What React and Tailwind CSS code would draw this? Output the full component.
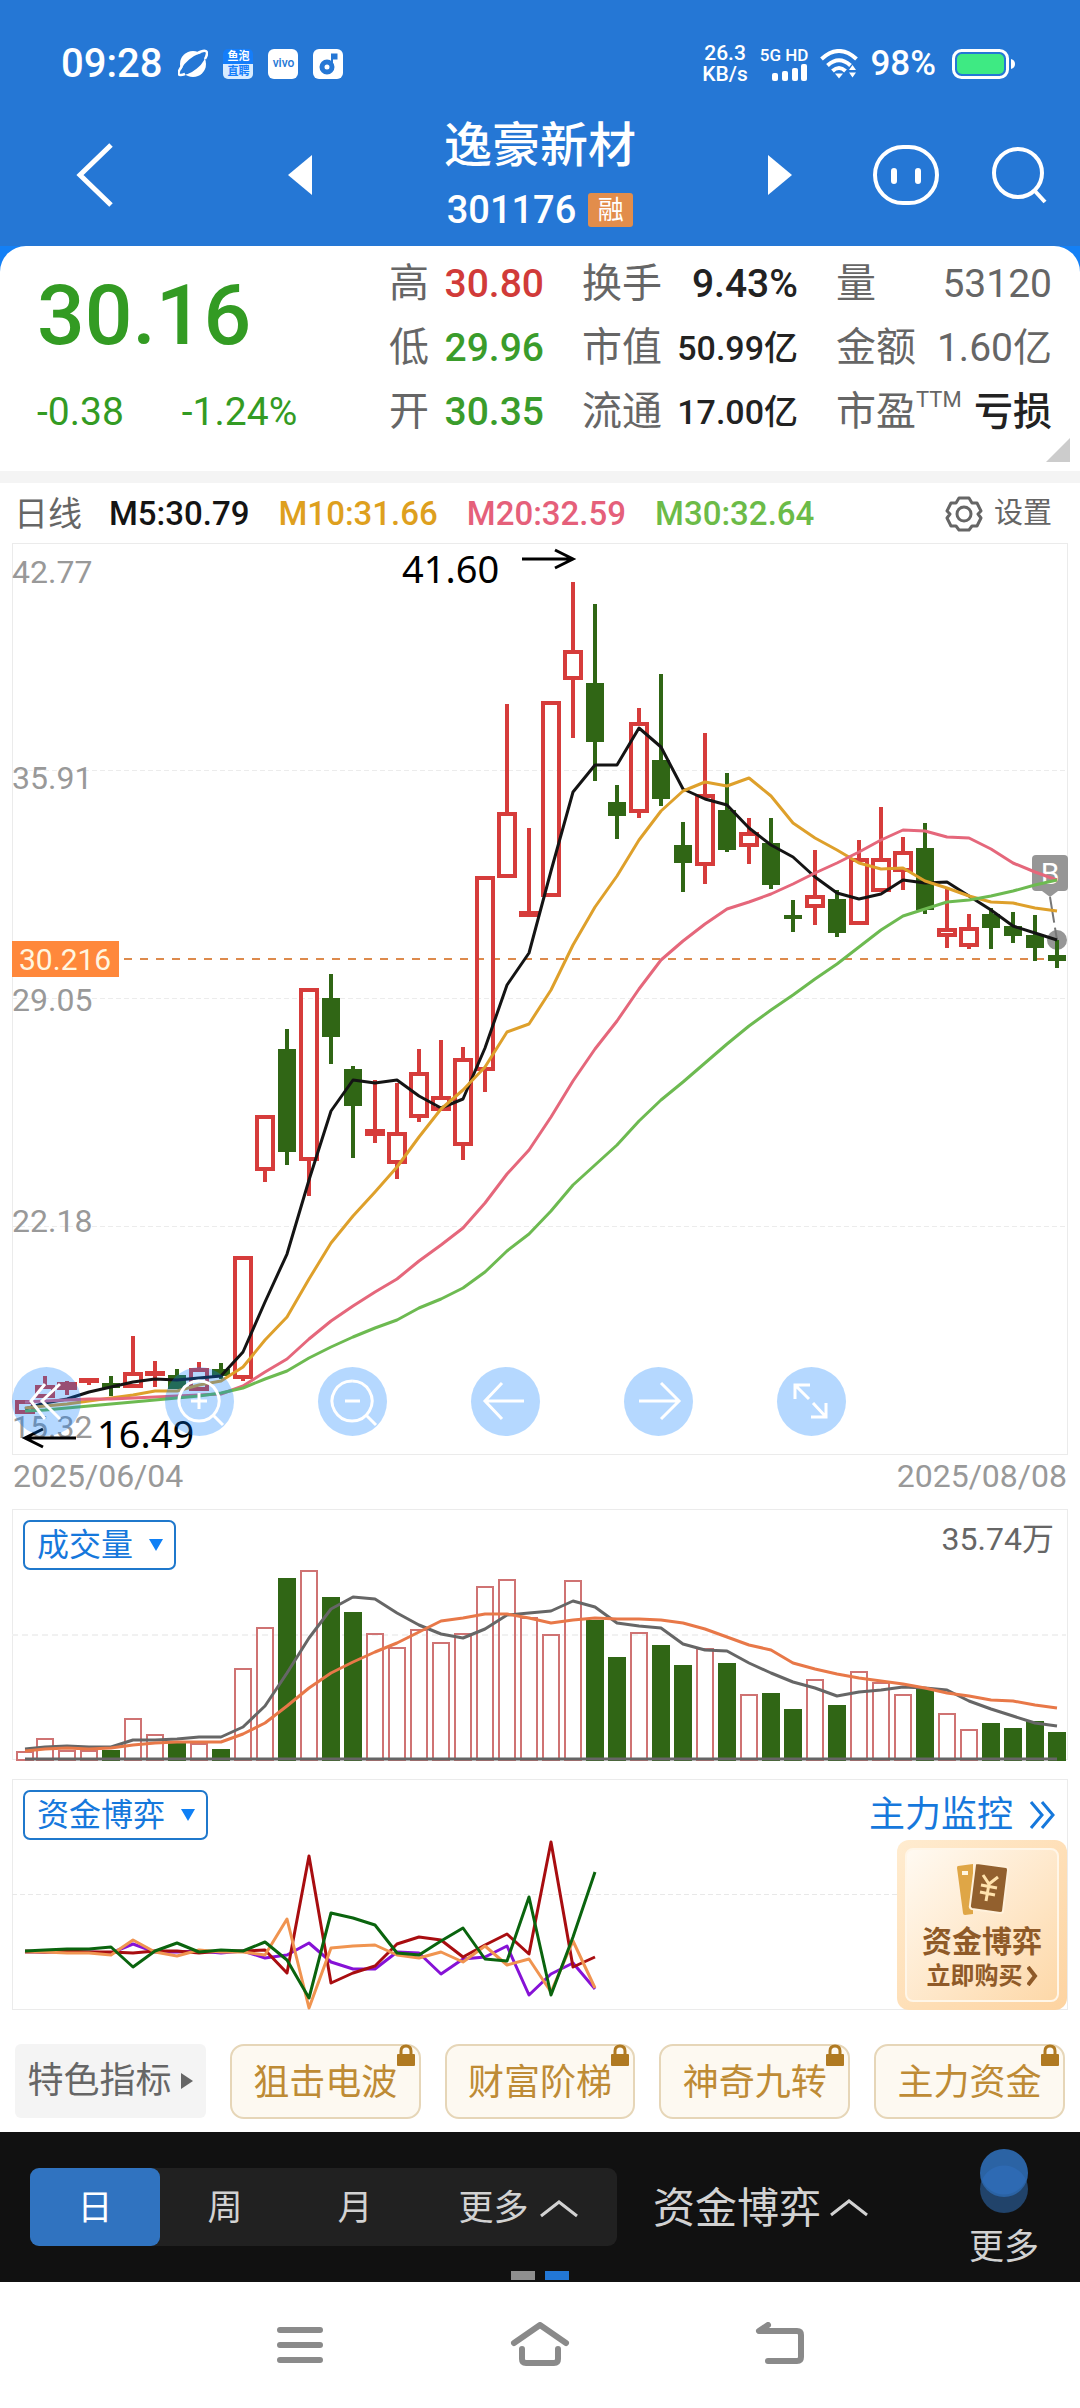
import React, { useState } from 'react';

const RED = '#d63c3b';
const GREEN = '#306615';

// [high, bodyTop, bodyBottom, low, up]
const candles = [
  [1400, 1400, 1414, 1414, 1], [1376, 1385, 1398, 1398, 1], [1381, 1382, 1390, 1395, 1], [1378, 1378, 1383, 1385, 1],
  [1376, 1383, 1388, 1396, 0], [1336, 1372, 1388, 1388, 1], [1361, 1371, 1375, 1387, 1], [1369, 1375, 1389, 1389, 0],
  [1362, 1368, 1391, 1391, 1], [1363, 1369, 1376, 1379, 0], [1256, 1256, 1379, 1381, 1], [1115, 1115, 1171, 1182, 1],
  [1029, 1049, 1152, 1165, 0], [988, 988, 1161, 1196, 1], [974, 998, 1037, 1064, 0], [1066, 1069, 1106, 1158, 0],
  [1080, 1129, 1136, 1143, 1], [1083, 1132, 1164, 1179, 1], [1049, 1072, 1118, 1122, 1], [1040, 1096, 1111, 1111, 1],
  [1047, 1058, 1146, 1160, 1], [876, 876, 1071, 1092, 1], [704, 812, 878, 878, 1], [828, 911, 917, 917, 1],
  [701, 701, 897, 897, 1], [582, 650, 680, 738, 1], [604, 683, 742, 781, 0], [785, 802, 816, 839, 0],
  [708, 722, 813, 818, 1], [674, 760, 799, 806, 0], [822, 845, 863, 892, 0], [733, 794, 866, 884, 1],
  [773, 810, 850, 852, 0], [818, 832, 847, 864, 1], [818, 843, 885, 889, 0], [900, 915, 919, 932, 0],
  [850, 895, 908, 925, 1], [890, 899, 933, 937, 0], [840, 858, 925, 925, 1], [807, 858, 892, 892, 1],
  [837, 851, 872, 890, 1], [823, 848, 910, 914, 0], [888, 928, 937, 948, 1], [914, 927, 947, 949, 1],
  [908, 914, 928, 949, 0], [912, 926, 936, 943, 0], [915, 935, 948, 961, 0], [940, 955, 961, 968, 0],
];

const averages = [
  { color: '#141414', data: [1409, 1403, 1399, 1392, 1387, 1382, 1379, 1380, 1378, 1376, 1352, 1302, 1254, 1180, 1111, 1080, 1083, 1080, 1096, 1108, 1099, 1048, 985, 953, 871, 792, 765, 765, 728, 747, 789, 799, 805, 828, 845, 857, 877, 893, 899, 894, 880, 883, 882, 896, 910, 926, 933, 940] },
  { color: '#dea02b', data: [1408, 1406, 1404, 1401, 1398, 1395, 1391, 1391, 1385, 1381, 1367, 1340, 1317, 1279, 1243, 1216, 1192, 1167, 1137, 1109, 1090, 1067, 1032, 1024, 990, 945, 907, 876, 840, 811, 791, 782, 786, 778, 796, 823, 838, 850, 863, 869, 868, 881, 888, 896, 902, 903, 908, 911] },
  { color: '#e5677b', data: [1402, 1401, 1400, 1399, 1399, 1398, 1397, 1396, 1395, 1394, 1386, 1372, 1359, 1339, 1321, 1306, 1292, 1279, 1261, 1245, 1228, 1203, 1174, 1150, 1117, 1081, 1049, 1021, 989, 960, 941, 924, 909, 902, 894, 884, 873, 863, 852, 840, 830, 831, 837, 838, 849, 863, 872, 880] },
  { color: '#6dba51', data: [1411, 1410, 1408, 1406, 1404, 1402, 1400, 1398, 1396, 1393, 1388, 1379, 1371, 1358, 1347, 1337, 1328, 1320, 1308, 1299, 1288, 1272, 1251, 1234, 1211, 1185, 1165, 1145, 1121, 1100, 1082, 1063, 1044, 1026, 1010, 995, 979, 964, 947, 930, 916, 909, 902, 900, 896, 891, 885, 880] },
];

const volumes = [1751, 1738, 1750, 1750, 1750, 1718, 1734, 1743, 1743, 1749, 1668, 1627, 1578, 1570, 1597, 1612, 1633, 1647, 1629, 1642, 1633, 1586, 1579, 1617, 1634, 1580, 1620, 1657, 1632, 1645, 1665, 1648, 1663, 1694, 1693, 1709, 1679, 1705, 1671, 1682, 1694, 1688, 1713, 1729, 1723, 1728, 1721, 1732];

const volumeLines = [
  { color: '#666666', data: [1749, 1747, 1746, 1747, 1747, 1740, 1740, 1739, 1737, 1737, 1727, 1706, 1673, 1638, 1609, 1597, 1599, 1613, 1625, 1634, 1638, 1629, 1615, 1613, 1611, 1601, 1607, 1623, 1626, 1628, 1644, 1650, 1651, 1663, 1673, 1682, 1688, 1696, 1692, 1690, 1687, 1688, 1690, 1701, 1709, 1716, 1723, 1726] },
  { color: '#e87848', data: [1751, 1749, 1748, 1749, 1748, 1745, 1743, 1742, 1742, 1742, 1734, 1723, 1706, 1688, 1673, 1662, 1652, 1643, 1632, 1621, 1618, 1614, 1614, 1618, 1623, 1620, 1618, 1619, 1619, 1620, 1623, 1629, 1637, 1645, 1650, 1663, 1669, 1674, 1678, 1681, 1684, 1688, 1693, 1696, 1700, 1701, 1705, 1708] },
];

const fundLines = [
  { color: '#8612d6', data: [1951, 1952, 1952, 1952, 1953, 1944, 1952, 1952, 1951, 1953, 1951, 1958, 1955, 1943, 1962, 1969, 1969, 1952, 1953, 1974, 1959, 1957, 1946, 1995, 1974, 1963, 1989] },
  { color: '#a80d10', data: [1952, 1952, 1951, 1952, 1952, 1953, 1951, 1951, 1953, 1951, 1951, 1950, 1973, 1856, 1983, 1973, 1966, 1944, 1937, 1940, 1957, 1945, 1934, 1954, 1842, 1967, 1957] },
  { color: '#f09450', data: [1951, 1952, 1953, 1953, 1955, 1940, 1952, 1956, 1950, 1952, 1952, 1955, 1919, 2008, 1948, 1946, 1945, 1955, 1958, 1952, 1962, 1946, 1965, 1959, 1992, 1941, 1988] },
  { color: '#0a640e', data: [1951, 1950, 1949, 1949, 1947, 1967, 1951, 1943, 1952, 1950, 1951, 1942, 1960, 1998, 1913, 1918, 1925, 1953, 1955, 1941, 1928, 1959, 1961, 1897, 1995, 1937, 1872] },
];

const xAt = (i) => (i === 0 ? 25 : 23 + i * 22);
const toPoints = (data) => data.map((y, i) => `${xAt(i)},${y}`).join(' ');

function Lines({ series }) {
  return series.map((s) => (
    <polyline key={s.color} points={toPoints(s.data)} fill="none" stroke={s.color} strokeWidth="3" strokeLinejoin="round" />
  ));
}

function StatusBar() {
  return (
    <div className="flex h-[88px] items-center pt-10 pl-[61px] pr-[64px] text-white">
      <span className="text-[40px] leading-[48px] font-medium">09:28</span>
      <div className="ml-4 flex items-center gap-[15px]">
        <svg className="size-[30px]" viewBox="0 0 30 30">
          <circle cx="15" cy="15" r="13" fill="#fff" />
          <ellipse cx="15" cy="15" rx="15" ry="6" fill="#2577d5" transform="rotate(-40 15 15)" />
          <path d="M4 17C-1 24-1 28 7 25M19 4.500C27 0 32 1 27 10" fill="none" stroke="#fff" strokeWidth="2.500" />
        </svg>
        <span className="flex size-[30px] flex-col overflow-hidden rounded-[5px] text-center text-[11px] leading-[15px] font-bold">
          <span className="bg-[#147dfa]">鱼泡</span>
          <span className="bg-[#d9ecff] text-[#147dfa]">直聘</span>
        </span>
        <span className="size-[30px] rounded-[6px] bg-white text-center text-[12px] leading-[29px] font-medium text-[#2577d5]">vivo</span>
        <svg className="size-[30px]" viewBox="0 0 30 30">
          <rect width="30" height="30" rx="6" fill="#fff" />
          <circle cx="14" cy="18" r="5" fill="none" stroke="#2577d5" strokeWidth="5" />
          <path d="M19 18V5.500h4.500V9.500H19" fill="#2577d5" stroke="#2577d5" strokeWidth="2" />
        </svg>
      </div>

      <div className="ml-auto flex items-center">
        <div className="flex flex-col items-center text-[21px] leading-[21px] font-medium">
          <span>26.3</span>
          <span>KB/s</span>
        </div>
        <div className="ml-3 flex flex-col items-end">
          <span className="text-[17px] leading-[18px] font-medium">5G HD</span>
          <svg className="h-[18px] w-[36px]" viewBox="0 0 36 18" fill="#fff">
            <rect x="0" y="9" width="6" height="8" rx="2" />
            <rect x="10" y="7" width="6" height="10" rx="2" />
            <rect x="20" y="4" width="6" height="13" rx="2" />
            <rect x="29" y="0" width="6" height="17" rx="2" />
          </svg>
        </div>
        <svg className="ml-3 h-[30px] w-[38px]" viewBox="0 0 38 30" fill="none" stroke="#fff" strokeWidth="4">
          <path d="M1.500 10Q19-6 36.500 10M7.500 16.500Q19 6 30.500 16.500M12.500 22Q19 16 25.500 22" />
          <path d="M15 24.500h8L19 29.500z" fill="#fff" stroke="none" />
          <path d="M29 21l3.500-5 3.500 5zM29 23.500l3.500 5 3.500-5z" fill="#fff" stroke="none" />
        </svg>
        <span className="ml-3 text-[35px] leading-[48px] font-medium">98%</span>
        <svg className="ml-4 h-[30px] w-[64px]" viewBox="0 0 64 30">
          <rect x="1.500" y="1.500" width="54" height="27" rx="8" fill="none" stroke="#fff" strokeWidth="3" />
          <rect x="5" y="5" width="47" height="20" rx="5" fill="#3eea83" />
          <path d="M59 10q4 1 4 5t-4 5z" fill="#fff" />
        </svg>
      </div>
    </div>
  );
}

function Header() {
  return (
    <div className="grid h-[158px] grid-cols-[1fr_504px_1fr] items-center pt-4">
      <div className="pl-[76px]">
        <button aria-label="返回" className="block">
          <svg className="h-[64px] w-[38px]" viewBox="0 0 38 64" fill="none" stroke="#fff" strokeWidth="5">
            <path d="M35 2L4 32l31 30" />
          </svg>
        </button>
      </div>
      <div className="flex items-center justify-between">
        <button aria-label="上一只">
          <svg className="h-[40px] w-[24px]" viewBox="0 0 24 40" fill="#fff"><path d="M24 0v40L0 20z" /></svg>
        </button>
        <div className="text-center text-white">
          <h1 className="text-[48px] leading-[60px] font-medium">逸豪新材</h1>
          <div className="mt-[10px] flex items-center justify-center gap-3 text-[38px] leading-[48px] font-medium">
            301176
            <span className="h-[34px] w-[45px] rounded-[3px] bg-[#e28d4b] text-[26px] leading-[34px] font-normal">融</span>
          </div>
        </div>
        <button aria-label="下一只">
          <svg className="h-[40px] w-[24px]" viewBox="0 0 24 40" fill="#fff"><path d="M0 0v40l24-20z" /></svg>
        </button>
      </div>
      <div className="flex items-center justify-end gap-[52px] pr-[33px]">
        <button aria-label="智能助手">
          <svg className="h-[60px] w-[66px]" viewBox="0 0 66 60" fill="none" stroke="#fff" strokeWidth="4">
            <rect x="2" y="2" width="62" height="56" rx="28" />
            <path d="M21 26v10M45 26v10" strokeWidth="6" strokeLinecap="round" />
          </svg>
        </button>
        <button aria-label="搜索">
          <svg className="h-[58px] w-[56px]" viewBox="0 0 56 58" fill="none" stroke="#fff" strokeWidth="4">
            <circle cx="27" cy="27" r="24" />
            <path d="M43 44l11 12" />
          </svg>
        </button>
      </div>
    </div>
  );
}

function Cell({ label, sup, value, className }) {
  return (
    <div className="flex h-16 items-center justify-between whitespace-nowrap">
      <dt className="flex text-[40px] leading-[48px] text-[#666]">
        {label}
        {sup && <span className="text-[22px] leading-[24px]">{sup}</span>}
      </dt>
      <dd className={className}>{value}</dd>
    </div>
  );
}

function Quote() {
  return (
    <section className="relative grid h-[225px] grid-cols-[1fr_155px_216px_216px] gap-x-[38px] rounded-t-[26px] bg-white pt-[6px] pr-7 pl-[37px]">
      <div className="text-[#339b23]">
        <p className="text-[84px] leading-[128px] font-medium">30.16</p>
        <p className="flex gap-[58px] text-[39px] leading-[64px]">
          <span>-0.38</span>
          <span>-1.24%</span>
        </p>
      </div>
      <dl>
        <Cell label="高" value="30.80" className="text-[39px] font-medium text-[#d13b39]" />
        <Cell label="低" value="29.96" className="text-[39px] font-medium text-[#3a9c2b]" />
        <Cell label="开" value="30.35" className="text-[39px] font-medium text-[#3a9c2b]" />
      </dl>
      <dl>
        <Cell label="换手" value="9.43%" className="text-[39px] font-medium text-[#222]" />
        <Cell label="市值" value="50.99亿" className="text-[34px] font-medium text-[#222]" />
        <Cell label="流通" value="17.00亿" className="text-[34px] font-medium text-[#222]" />
      </dl>
      <dl>
        <Cell label="量" value="53120" className="text-[39px] text-[#666]" />
        <Cell label="金额" value="1.60亿" className="text-[39px] text-[#666]" />
        <Cell label="市盈" sup="TTM" value="亏损" className="text-[39px] font-medium text-[#222]" />
      </dl>
      <svg className="absolute right-[10px] bottom-[9px] size-[24px]" viewBox="0 0 24 24" fill="#ccc"><path d="M24 0v24H0z" /></svg>
    </section>
  );
}

function AverageBar() {
  return (
    <div className="flex h-[60px] items-center pt-[2px] pr-7 pl-[14px] font-medium whitespace-nowrap">
      <span className="text-[34px] font-normal text-[#666]">日线</span>
      <div className="ml-[27px] flex gap-[29px] text-[33px]">
        <span className="text-[#141414]">M5:30.79</span>
        <span className="text-[#dea01e]">M10:31.66</span>
        <span className="text-[#e5607a]">M20:32.59</span>
        <span className="text-[#6cbb48]">M30:32.64</span>
      </div>
      <button className="ml-auto flex items-center gap-[11px] text-[29px] font-normal text-[#666]">
        <svg className="size-[38px]" viewBox="0 0 38 38" fill="none" stroke="#666" strokeWidth="3">
          <path d="M14 3h10l3 5h5l4 8-3 3 3 4-4 8h-5l-3 4H14l-3-4H6l-4-8 3-4-3-3 4-8h5z" strokeLinejoin="round" />
          <circle cx="19" cy="19" r="7" />
        </svg>
        设置
      </button>
    </div>
  );
}

const tools = [
  { label: '最早', d: 'M33 17L19 34l14 18M48 17L30 34l18 18' },
  { label: '放大', d: 'M34 14a20 20 0 1 0 .1 0M34 26v16M26 34h16M48 48l10 10' },
  { label: '缩小', d: 'M34 14a20 20 0 1 0 .1 0M27 34h15M48 48l10 10' },
  { label: '左移', d: 'M53 34H14M31 16L14 34l17 18' },
  { label: '右移', d: 'M15 34h39M37 16l18 18-18 18' },
  { label: '全屏', d: 'M33 18H18v14M18 18l14 14M34 50h15V36M49 50L36 36' },
];

function CandleChart() {
  return (
    <div className="relative">
      <svg className="block h-auto w-full" viewBox="0 543 1080 912">
        <rect x="12.500" y="543.500" width="1055" height="911" fill="none" stroke="#ebebeb" strokeWidth="1" />
        {[770, 998, 1226].map((y) => (
          <path key={y} d={`M12 ${y}.5H1066`} stroke="#ececec" strokeDasharray="5 3" />
        ))}
        <g fill="#999" fontSize="32">
          <text x="12" y="583">42.77</text>
          <text x="12" y="789">35.91</text>
          <text x="12" y="1011">29.05</text>
          <text x="12" y="1232">22.18</text>
          <text x="12" y="1438">15.32</text>
        </g>
        <path d="M124 959H1046" stroke="#dd8a4c" strokeWidth="2" strokeDasharray="8 8" />
        <rect x="12" y="941" width="107" height="36" fill="#ff883b" />
        <text x="19" y="970" fontSize="30" fill="#fff6e0">30.216</text>

        {/* Buy marker */}
        <g fill="#969696">
          <rect x="1032" y="855" width="36" height="36" rx="4" />
          <path d="M1042 891h16l-8 6z" />
          <circle cx="1057" cy="940" r="10" />
        </g>
        <path d="M1050 897l7 43" stroke="#777" strokeWidth="2" strokeDasharray="26 5" />
        <text x="1050" y="884" fontSize="30" fill="#fff" textAnchor="middle">B</text>

        {candles.map(([high, top, bottom, low, up], i) => {
          const x = xAt(i);
          return up ? (
            <g key={i} stroke={RED} strokeWidth="4" fill="none">
              <path d={`M${x} ${high}V${top}M${x} ${bottom}V${low}`} />
              <rect x={x - 8} y={top + 2} width="16" height={Math.max(bottom - top - 4, 1)} />
            </g>
          ) : (
            <g key={i} fill={GREEN}>
              <rect x={x - 2} y={high} width="4" height={low - high} />
              <rect x={x - 9} y={top} width="18" height={bottom - top} />
            </g>
          );
        })}
        <Lines series={averages} />

        <g className="font-['Noto_Sans',sans-serif]" fontSize="38" fill="#000">
          <text x="402" y="583">41.60</text>
          <text x="97" y="1448">16.49</text>
        </g>
        <path d="M522 559h50M555 550l18 9-18 9M76 1438H26M43 1429l-18 9 18 9" fill="none" stroke="#000" strokeWidth="3" />
      </svg>
      <div className="absolute bottom-[19px] left-3 flex gap-[84px]">
        {tools.map((t) => (
          <button key={t.label} aria-label={t.label} className="size-[69px] rounded-full bg-[#007aff]/[0.29]">
            <svg className="size-full" viewBox="0 0 69 69" fill="none" stroke="#fff" strokeWidth="3"><path d={t.d} /></svg>
          </button>
        ))}
      </div>
    </div>
  );
}

function IndicatorSelect({ name }) {
  return (
    <div className="absolute top-3 left-[23px] text-[#1678dc]">
      <select
        aria-label="指标"
        className="h-[50px] appearance-none rounded-[7px] border-2 border-[#1f78cc] bg-white pr-[40px] pl-[12px] text-[32px] leading-[46px]"
      >
        <option>{name}</option>
      </select>
      <svg className="pointer-events-none absolute top-[19px] right-[13px] h-[12px] w-[14px]" viewBox="0 0 14 12" fill="#0f80f5"><path d="M0 0h14L7 12z" /></svg>
    </div>
  );
}

function VolumeChart() {
  return (
    <div className="relative">
      <svg className="block h-auto w-full" viewBox="0 1508 1080 254">
        <rect x="12.500" y="1509.500" width="1055" height="250" fill="none" stroke="#ebebeb" />
        <path d="M12 1635H1066" stroke="#f1f1f1" strokeWidth="2" strokeDasharray="6 4" />
        {volumes.map((y, i) =>
          candles[i][4] ? (
            <rect key={i} x={xAt(i) - 8} y={y + 1} width="16" height={1759 - y} fill="none" stroke="#cf7373" strokeWidth="2" />
          ) : (
            <rect key={i} x={xAt(i) - 9} y={y} width="18" height={1761 - y} fill={GREEN} />
          )
        )}
        <path d="M25 1759H1057" stroke="#666" strokeWidth="3" />
        <Lines series={volumeLines} />
      </svg>
      <IndicatorSelect name="成交量" />
      <span className="absolute top-[9px] right-[26px] text-[32px] leading-[44px] text-[#666]">35.74万</span>
    </div>
  );
}

function FundChart() {
  return (
    <div className="relative mt-4">
      <svg className="block h-auto w-full" viewBox="0 1778 1080 232">
        <rect x="12.500" y="1779.500" width="1055" height="230" fill="none" stroke="#ebebeb" />
        <path d="M12 1894.500H1066" stroke="#e8e8e8" strokeDasharray="5 3" />
        <Lines series={fundLines} />
      </svg>
      <IndicatorSelect name="资金博弈" />
      <a href="#monitor" className="absolute top-[13px] right-[24px] flex items-center gap-4 text-[36px] leading-[48px] text-[#1678dc]">
        主力监控
        <svg className="h-[28px] w-[27px]" viewBox="0 0 27 28" fill="none" stroke="currentColor" strokeWidth="3">
          <path d="M2 1l11 13L2 27M13 1l11 13-11 13" />
        </svg>
      </a>
      <button className="absolute right-[13px] bottom-0 h-[170px] w-[170px] rounded-[12px] bg-linear-to-br from-[#ffecd0] to-[#fdd3a0] p-2 text-[#8f5a28]">
        <span className="flex h-full flex-col items-center rounded-[8px] border-2 border-[#fff6e8] bg-linear-to-br from-[#fffaf2] to-[#fdd8a8] pt-3">
          <svg className="h-[54px] w-[54px]" viewBox="0 0 54 54">
            <path d="M3 4l15-2v50l-8 1q-2 0-2-2L2 6q0-2 1-2z" fill="#dfa646" />
            <rect x="7" y="9" width="6" height="4" fill="#fff6e0" />
            <path d="M22 1l29 4q2 0 2 3l-5 41q0 2-3 2l-28-4q-3-1-2-4l5-40q0-2 2-2z" fill="#92602e" stroke="#fff1dc" strokeWidth="2" />
            <path d="M28 13l6 9 9-7M26 23l16 3M25 30l15 3M34 22l-3 17" fill="none" stroke="#ffe2ac" strokeWidth="3" />
          </svg>
          <span className="mt-2 text-[30px] leading-[36px] font-bold">资金博弈</span>
          <span className="flex items-center gap-1 text-[24px] leading-[32px] font-bold">
            立即购买
            <svg className="h-[20px] w-[11px]" viewBox="0 0 11 20" fill="none" stroke="currentColor" strokeWidth="4"><path d="M1 1l7 9-7 9" /></svg>
          </span>
        </span>
      </button>
    </div>
  );
}

function Chips() {
  return (
    <div className="grid grid-cols-5 gap-6 pt-[34px] pr-[15px] pb-[13px] pl-[15px] text-[36px] leading-[74px]">
      <button className="flex h-[74px] items-center justify-center gap-[10px] rounded-[6px] bg-[#f4f4f4] text-[#666]">
        特色指标
        <svg className="h-[16px] w-[12px]" viewBox="0 0 12 16" fill="#666"><path d="M0 0v16l12-8z" /></svg>
      </button>
      {['狙击电波', '财富阶梯', '神奇九转', '主力资金'].map((name) => (
        <button key={name} className="relative h-[75px] rounded-[14px] border-2 border-[#e6d6b8] bg-[#fdf9f1] text-[#be8b35]">
          {name}
          <svg className="absolute -top-[2px] right-[4px] h-[23px] w-[18px]" viewBox="0 0 18 23">
            <path d="M4 10V7q0-5 5-5t5 5v3" fill="none" stroke="#b07a22" strokeWidth="3" />
            <rect y="10" width="18" height="12" rx="1" fill="#b07a22" />
          </svg>
        </button>
      ))}
    </div>
  );
}

function ChevronUp() {
  return (
    <svg className="h-[18px] w-[40px]" viewBox="0 0 40 18" fill="none" stroke="currentColor" strokeWidth="3">
      <path d="M2 16L20 2l18 14" />
    </svg>
  );
}

function PeriodBar() {
  const [period, setPeriod] = useState('日');
  return (
    <div className="relative flex h-[150px] items-center bg-[#111] pr-[41px] pl-[30px] text-[#d2d2d2]">
      <div className="flex h-[78px] rounded-[9px] bg-[#212121] text-[35px]">
        {['日', '周', '月'].map((p) => (
          <button
            key={p}
            onClick={() => setPeriod(p)}
            className={`w-[130px] rounded-[9px] pt-1 ${period === p ? 'bg-[#3073c0] text-white' : ''}`}
          >
            {p}
          </button>
        ))}
        <button className="flex w-[197px] items-center justify-center gap-[10px] pt-1">
          更多
          <ChevronUp />
        </button>
      </div>
      <button className="ml-9 flex items-center gap-2 pt-[2px] text-[42px]">
        资金博弈
        <ChevronUp />
      </button>
      <button className="ml-auto flex flex-col items-center pt-1 text-[35px] leading-[44px]">
        <svg className="h-[66px] w-[48px]" viewBox="0 0 48 66">
          <circle cx="24" cy="41" r="24" fill="#21436a" />
          <circle cx="24" cy="25" r="24" fill="#2b63a4" />
          <path d="M2 32a24 24 0 0 1 44 0A24 24 0 0 1 2 32z" fill="#2e6ab3" />
        </svg>
        <span className="mt-3">更多</span>
      </button>
      <div className="absolute inset-x-0 bottom-[2px] flex justify-center gap-[10px]">
        <span className="h-[9px] w-6 bg-[#8f8f8f]" />
        <span className="h-[9px] w-6 bg-[#2277d6]" />
      </div>
    </div>
  );
}

function SystemNav() {
  return (
    <nav className="flex h-[126px] items-center justify-center gap-[180px]">
      <button aria-label="最近任务">
        <svg className="h-[46px] w-[60px]" viewBox="0 0 60 46" stroke="#8a8a8a" strokeWidth="6" strokeLinecap="round">
          <path d="M10 8h40M10 23h40M10 38h40" />
        </svg>
      </button>
      <button aria-label="主屏幕">
        <svg className="h-[46px] w-[60px]" viewBox="0 0 60 46" fill="none" stroke="#8a8a8a" strokeWidth="6" strokeLinecap="round">
          <path d="M4 21L30 3l26 18M12 27v10q0 4 4 4h28q4 0 4-4V27" strokeLinejoin="round" />
        </svg>
      </button>
      <button aria-label="返回上一页">
        <svg className="h-[46px] w-[60px]" viewBox="0 0 60 46" fill="none" stroke="#8a8a8a" strokeWidth="6" strokeLinecap="round" strokeLinejoin="round">
          <path d="M18 3L9 9h38q4 0 4 4v22q0 4-4 4H18" />
        </svg>
      </button>
    </nav>
  );
}

export default function App() {
  return (
    <main className="w-full overflow-hidden bg-white font-['Roboto','Noto_Sans_CJK_SC',sans-serif]">
      <header className="bg-[#2577d5]">
        <StatusBar />
        <Header />
      </header>
      <div className="bg-[#1480f5]">
        <Quote />
      </div>
      <div className="h-3 bg-[#f4f4f4]" />
      <AverageBar />
      <CandleChart />
      <div className="flex h-[53px] justify-between px-[13px] text-[32px] leading-[42px] text-[#999]">
        <span>2025/06/04</span>
        <span>2025/08/08</span>
      </div>
      <VolumeChart />
      <FundChart />
      <Chips />
      <PeriodBar />
      <SystemNav />
    </main>
  );
}
